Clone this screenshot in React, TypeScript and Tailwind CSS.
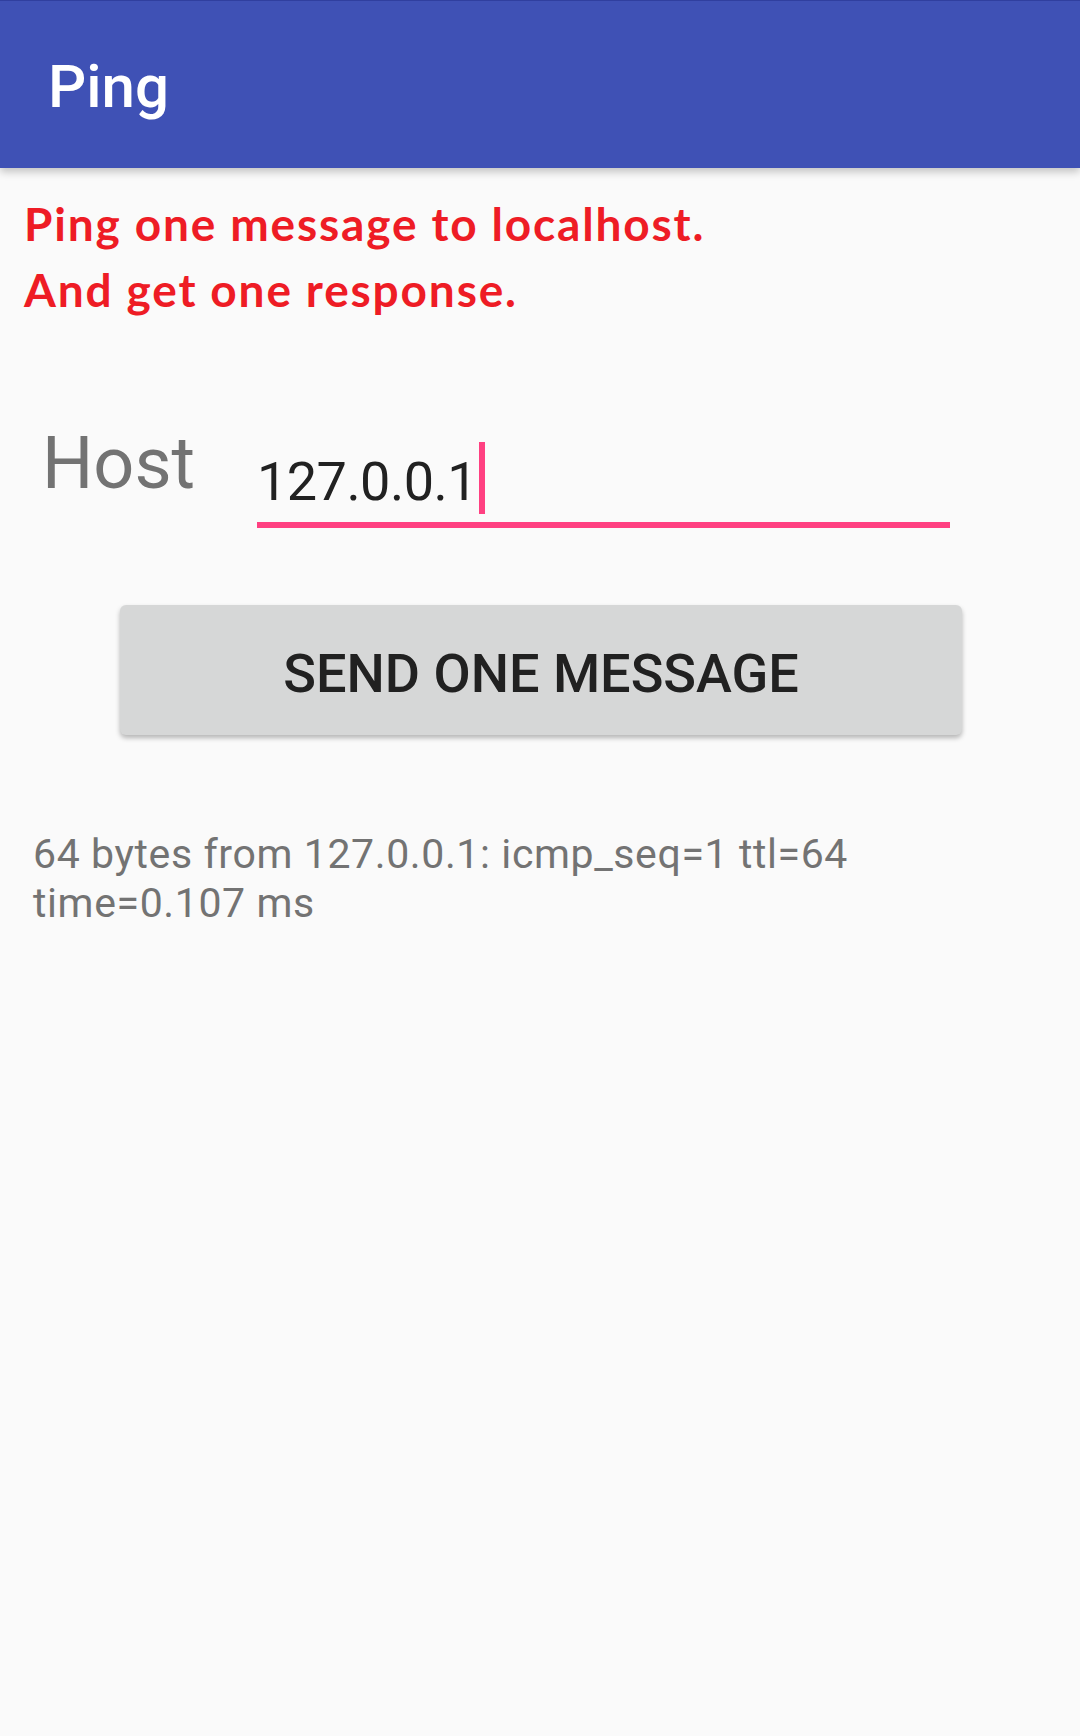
import React from "react";

const roboto = { fontFamily: "Roboto, 'Liberation Sans', sans-serif" };

const AppBar: React.FC<{ title: string }> = ({ title }) => (
  <header className="relative z-10 h-[168px] bg-[#3F51B5] border-t border-[#303F9F] shadow-[0_4px_8px_rgba(0,0,0,0.22)]">
    <h1 className="pl-[48px] pt-[51px] text-[60px] leading-[70px] font-medium text-white">
      {title}
    </h1>
  </header>
);

const HostField: React.FC<{ value: string }> = ({ value }) => (
  <div className="flex items-start mt-[99px] pl-[42px]">
    <label className="w-[215px] text-[72px] leading-[84px] text-[#737373]">Host</label>
    <div className="flex flex-col w-[693px] mt-[28px]">
      <div className="flex items-start h-[63px]">
        <span className="text-[54px] leading-[63px] tracking-[-0.01em] text-[#212121]">{value}</span>
        <span className="w-[6px] h-[72px] -mt-[8px] ml-[2px] bg-[#FF4081]" />
      </div>
      <div className="mt-[9px] h-[6px] bg-[#FF4081]" />
    </div>
  </div>
);

export default function App() {
  return (
    <div style={roboto} className="min-h-[1736px] w-[1080px] bg-[#FAFAFA]">
      <AppBar title="Ping" />

      <p
        style={{ fontFamily: "Lato, 'Noto Sans CJK SC', sans-serif" }}
        className="mt-[23px] pl-[24px] text-[46px] leading-[66px] tracking-[0.04em] font-bold text-[#EE1C25]"
      >
        Ping one message to localhost.
        <br />
        And get one response.
      </p>

      <HostField value="127.0.0.1" />

      <div className="mt-[77px] pl-[120px]">
        <button className="flex items-center justify-center w-[842px] h-[130px] pt-[6px] rounded-[6px] bg-[#D6D7D7] shadow-[0_3px_5px_rgba(0,0,0,0.28)] text-[54px] leading-[63px] font-medium uppercase text-[#212121]">
          Send one message
        </button>
      </div>

      <p className="mt-[95px] pl-[33px] w-[1020px] text-[41px] leading-[49px] tracking-[0.015em] text-[#737373]">
        64 bytes from 127.0.0.1: icmp_seq=1 ttl=64 time=0.107 ms
      </p>
    </div>
  );
}
